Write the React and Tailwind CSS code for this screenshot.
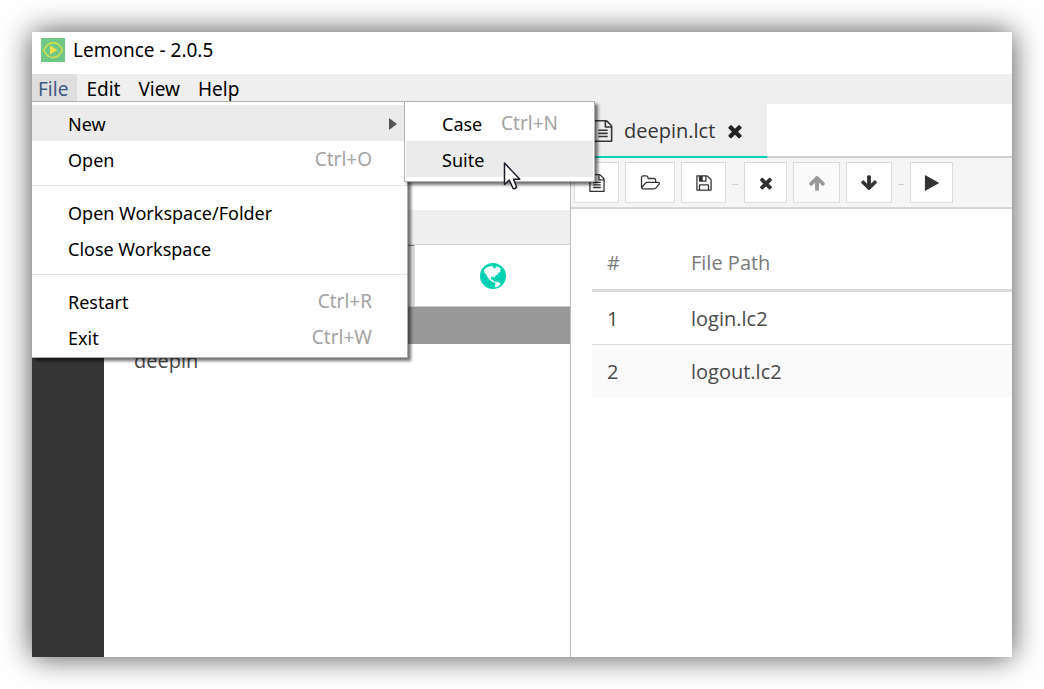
const FILE_TEXT =
  'M1596 380q28 28 48 76t20 88v1152q0 40-28 68t-68 28h-1344q-40 0-68-28t-28-68v-1600q0-40 28-68t68-28h896q40 0 88 20t76 48zm-444-244v376h376q-10-29-22-41l-313-313q-12-12-41-22zm384 1528v-1024h-416q-40 0-68-28t-28-68v-416h-768v1536h1280zm-1024-864q0-14 9-23t23-9h704q14 0 23 9t9 23v64q0 14-9 23t-23 9h-704q-14 0-23-9t-9-23v-64zm736 224q14 0 23 9t9 23v64q0 14-9 23t-23 9h-704q-14 0-23-9t-9-23v-64q0-14 9-23t23-9h704zm0 256q14 0 23 9t9 23v64q0 14-9 23t-23 9h-704q-14 0-23-9t-9-23v-64q0-14 9-23t23-9h704z';
const FOLDER_OPEN =
  'M1845 931q0-35-53-35h-1088q-40 0-85.5 21.5t-71.5 52.5l-294 363q-18 24-18 40 0 35 53 35h1088q40 0 86-22t71-53l294-363q18-22 18-39zm-1141-163h768v-160q0-40-28-68t-68-28h-576q-40 0-68-28t-28-68v-64q0-40-28-68t-68-28h-320q-40 0-68 28t-28 68v853l256-315q44-53 116-87.5t140-34.5zm1269 163q0 62-46 120l-295 363q-43 53-116 87.5t-140 34.5h-1088q-92 0-158-66t-66-158v-960q0-92 66-158t158-66h320q92 0 158 66t66 158v32h544q92 0 158 66t66 158v160h192q54 0 99 24.5t67 70.5q15 32 15 68z';
const FLOPPY =
  'M512 1536h768v-384h-768v384zm896 0h128v-896q0-14-10-38.5t-20-34.5l-281-281q-10-10-34-20t-39-10v416q0 40-28 68t-68 28h-576q-40 0-68-28t-28-68v-416h-128v1280h128v-416q0-40 28-68t68-28h832q40 0 68 28t28 68v416zm-384-928v-320q0-13-9.5-22.5t-22.5-9.5h-192q-13 0-22.5 9.5t-9.5 22.5v320q0 13 9.5 22.5t22.5 9.5h192q13 0 22.5-9.5t9.5-22.5zm640 32v928q0 40-28 68t-68 28h-1344q-40 0-68-28t-28-68v-1344q0-40 28-68t68-28h928q40 0 88 20t76 48l280 280q28 28 48 76t20 88z';
const TIMES =
  'M1490 1322q0 40-28 68l-136 136q-28 28-68 28t-68-28l-294-294-294 294q-28 28-68 28t-68-28l-136-136q-28-28-28-68t28-68l294-294-294-294q-28-28-28-68t28-68l136-136q28-28 68-28t68 28l294 294 294-294q28-28 68-28t68 28l136 136q28 28 28 68t-28 68l-294 294 294 294q28 28 28 68z';
const ARROW_UP =
  'M1675 971q0 51-37 90l-75 75q-38 38-91 38-54 0-90-38l-294-293v704q0 52-37.5 84.5t-90.5 32.5h-128q-53 0-90.5-32.5t-37.5-84.5v-704l-294 293q-36 38-90 38t-90-38l-75-75q-38-38-38-90 0-53 38-91l651-651q35-37 90-37 54 0 91 37l651 651q37 39 37 91z';
const ARROW_DOWN =
  'M1675 832q0 53-37 90l-651 652q-39 37-91 37-53 0-90-37l-651-652q-38-36-38-90 0-53 38-91l74-75q39-37 91-37 53 0 90 37l294 294v-704q0-52 38-90t90-38h128q52 0 90 38t38 90v704l294-294q37-37 90-37 52 0 91 37l75 75q37 39 37 91z';
const PLAY =
  'M1576 927l-1328 738q-23 13-39.5 3t-16.5-36v-1472q0-26 16.5-36t39.5 3l1328 738q23 13 23 31t-23 31z';

function Icon({ d, className = 'size-5', viewBox = '0 0 1792 1792' }) {
  return (
    <svg viewBox={viewBox} fill="currentColor" aria-hidden="true" className={`shrink-0 ${className}`}>
      <path d={d} />
    </svg>
  );
}

function Logo() {
  return (
    <svg viewBox="0 0 24 24" className="size-6 shrink-0" aria-hidden="true">
      <rect width="24" height="24" fill="#70c887" />
      <path
        d="M2.500 12.500C4 10 5 8.500 7 6.500C10 4 14.500 4 17.500 6.500C19.500 8.500 20.500 9.500 21.500 11.500C20.500 14 19.500 16 17 18C14 20.200 9.500 20 7 18C5 16.500 4.500 14.500 2.500 12.500Z"
        fill="none"
        stroke="#d3de50"
        strokeWidth="1.600"
      />
      <path d="M9 7.500L16.500 12L9 16.500Z" fill="#f5e14c" />
    </svg>
  );
}

function Globe() {
  return (
    <svg viewBox="0 0 26 26" className="size-[26px]" aria-hidden="true">
      <circle cx="13" cy="13" r="13" fill="#00d1b2" />
      <path
        d="M4 7L6.500 4.500L10 3.200L13.500 3.200L12.800 4.800L15 5.600L16.500 3.600L19 4.200L21 6L20 7.200L20.500 9L18.500 9.500L18 11.500L15.500 12.500L14.500 14.800L13 13.600L11 14.200L11 16.500L13 16.800L14 18.800L17 18.800L20 19.800L20.500 21.500L17.500 24L15.500 24.500L15 22L15.800 20L13 19.300L10 17L7.500 14L6 11L4.200 9.500Z"
        fill="#fff"
      />
    </svg>
  );
}

function MenuItem({ label, shortcut, active, arrow }) {
  return (
    <li role="none">
      <button
        type="button"
        role="menuitem"
        className={`flex h-9 w-full items-center justify-between pt-px pl-9 text-left ${arrow ? 'pr-[10px]' : 'pr-[35px]'} ${active ? 'bg-[#ebebeb]' : 'bg-white'}`}
      >
        <span>{label}</span>
        {shortcut && <span className="text-[19px] text-[#a3a3a3]">{shortcut}</span>}
        {arrow && (
          <svg viewBox="0 0 8 12" className="h-3 w-2" fill="#555" aria-hidden="true">
            <path d="M0 0L8 6L0 12Z" />
          </svg>
        )}
      </button>
    </li>
  );
}

function Separator() {
  return <li role="separator" className="my-2 h-px bg-[#e4e4e4]" />;
}

function FileMenu() {
  return (
    <div className="absolute top-full left-0 z-10 w-[376px] border-t border-r border-b border-[#b0b0b0] bg-white pt-[3px] pb-[2px] text-lg shadow-[3px_3px_3px_rgba(0,0,0,0.55)]">
      <ul role="menu" aria-label="File">
        <MenuItem label="New" arrow active />
        <MenuItem label="Open" shortcut="Ctrl+O" />
        <Separator />
        <MenuItem label="Open Workspace/Folder" />
        <MenuItem label="Close Workspace" />
        <Separator />
        <MenuItem label="Restart" shortcut="Ctrl+R" />
        <MenuItem label="Exit" shortcut="Ctrl+W" />
      </ul>
      <div className="absolute -top-px left-full -ml-[3px] w-[191px] border border-[#b0b0b0] bg-white px-px pt-[3px] pb-1 shadow-[3px_3px_3px_rgba(0,0,0,0.55)]">
        <ul role="menu" aria-label="New">
          <MenuItem label="Case" shortcut="Ctrl+N" />
          <MenuItem label="Suite" active />
        </ul>
        <svg viewBox="0 0 18 30" className="absolute top-[59px] left-[98px] h-[30px] w-[18px]" aria-hidden="true">
          <path
            d="M1.500 2V23.500L6.300 19L10 27.300Q12 28.500 13.600 26L10.500 18.300H16.800Z"
            fill="#fff"
            stroke="#1c1c28"
            strokeWidth="1.500"
            strokeLinejoin="round"
          />
        </svg>
      </div>
    </div>
  );
}

function ToolButton({ label, d, width, disabled, viewBox, icon = 'size-[18px]' }) {
  return (
    <button
      type="button"
      aria-label={label}
      disabled={disabled}
      className={`flex h-[41px] items-center justify-center border border-[#dbdbdb] bg-white text-[#333] disabled:bg-[#fafafa] disabled:text-[#999] ${width}`}
    >
      <Icon d={d} viewBox={viewBox} className={icon} />
    </button>
  );
}

function Dash() {
  return <span aria-hidden="true" className="mt-1 h-px w-[6px] bg-[#d0d0d0]" />;
}

function Explorer() {
  return (
    <section className="flex w-[467px] shrink-0 flex-col border-r border-[#bdbdbd] pt-[106px]">
      <div className="h-[35px] border-b border-[#d6d6d6] bg-[#efefef]" />
      <div className="flex h-[62px] border-b border-[#c8c8c8]">
        <button type="button" aria-label="Files" className="w-[311px] border-t border-r-2 border-t-[#777] border-r-[#dbdbdb] bg-[#e8e8e8]" />
        <button type="button" aria-label="Web" className="flex grow items-center justify-center">
          <Globe />
        </button>
      </div>
      <div className="h-[37px] bg-[#999]" />
      <a href="#deepin" className="pl-[30px] text-xl leading-[34px] text-[#4a4a4a]">
        deepin
      </a>
    </section>
  );
}

const rows = ['login.lc2', 'logout.lc2'];

function Editor() {
  return (
    <main className="flex min-w-0 grow flex-col text-xl text-[#4a4a4a]">
      <div className="flex h-[54px] border-b-2 border-[#cfcfcf]">
        <div className="-mb-[2px] flex items-center border-b-2 border-[#00d1b2] bg-[#eee] pt-[2px] pr-[22px] pl-[21px] text-[#363636]">
          <Icon d={FILE_TEXT} className="size-[22px]" />
          <span className="ml-[10px]">deepin.lct</span>
          <button type="button" aria-label="Close tab" className="ml-[10px] text-[#222]">
            <Icon d={TIMES} />
          </button>
        </div>
      </div>
      <div className="flex h-[51px] items-center gap-[6px] border-b-2 border-[#d6d6d6] bg-[#f5f5f5] pl-[3px]">
        <ToolButton label="New" d={FILE_TEXT} width="w-[45px]" />
        <ToolButton label="Open" d={FOLDER_OPEN} viewBox="0 0 2048 1792" width="w-[50px]" icon="h-[18px] w-[21px]" />
        <ToolButton label="Save" d={FLOPPY} width="w-[45px]" />
        <Dash />
        <ToolButton label="Delete" d={TIMES} width="w-[43px]" />
        <ToolButton label="Move up" d={ARROW_UP} width="w-[47px]" disabled />
        <ToolButton label="Move down" d={ARROW_DOWN} width="w-[46px]" />
        <Dash />
        <ToolButton label="Run" d={PLAY} width="w-[43px]" />
      </div>
      <div className="pt-[27px] pl-[21px]">
        <table className="w-full table-fixed border-collapse text-left">
          <thead>
            <tr className="h-[54px] border-b-[3px] border-[#dbdbdb] text-[#7a7a7a]">
              <th className="w-[84px] px-[15px] pt-[2px] font-normal">#</th>
              <th className="px-[15px] pt-[2px] font-normal">File Path</th>
            </tr>
          </thead>
          <tbody>
            {rows.map((name, i) => (
              <tr key={name} className="h-[54px] border-b border-[#dbdbdb] last:border-b-0 even:bg-[#fafafa]">
                <td className="px-[15px] pt-[2px]">{i + 1}</td>
                <td className="px-[15px] pt-[2px]">{name}</td>
              </tr>
            ))}
          </tbody>
        </table>
      </div>
    </main>
  );
}

export default function App() {
  return (
    <div className="h-screen bg-white p-8 font-['Open_Sans','Noto_Sans',sans-serif]">
      <div className="flex h-full flex-col bg-white shadow-[0_0_28px_rgba(0,0,0,0.7)]">
        <header className="font-['Noto_Sans','Open_Sans',sans-serif] text-[19px] text-black">
          <div className="flex h-[42px] items-center gap-2 pb-[6px] pl-[9px]">
            <Logo />
            <h1>Lemonce - 2.0.5</h1>
          </div>
          <nav className="relative flex h-[27px] items-stretch bg-[#efefef]" aria-label="Main">
            <button type="button" aria-expanded="true" className="bg-[#dedede] pt-px pr-[9px] pl-[6px] text-[#3d5a85]">
              File
            </button>
            <button type="button" className="px-[9px] pt-px">Edit</button>
            <button type="button" className="px-[9px] pt-px">View</button>
            <button type="button" className="px-[9px] pt-px">Help</button>
            <FileMenu />
          </nav>
          <div className="h-[3px] bg-[#efefef]" />
        </header>
        <div className="flex min-h-0 grow overflow-hidden">
          <aside className="w-[72px] shrink-0 bg-[#363636]" />
          <Explorer />
          <Editor />
        </div>
      </div>
    </div>
  );
}
